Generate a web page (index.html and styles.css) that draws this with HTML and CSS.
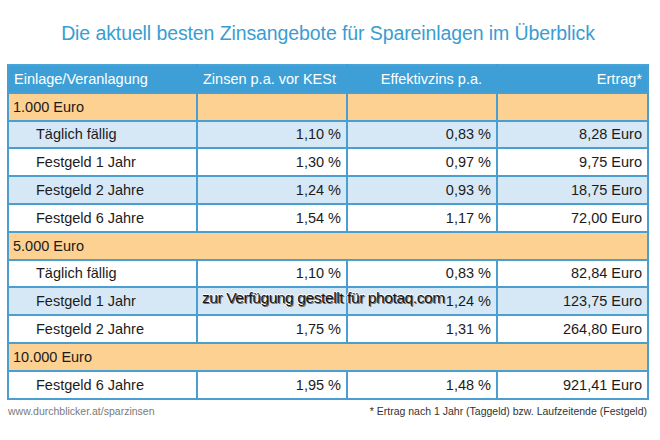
FILE: index.html
```html
<!DOCTYPE html>
<html lang="de">
<head>
<meta charset="utf-8">
<title>Zinsangebote</title>
<link rel="stylesheet" href="styles.css">
</head>
<body>
<div class="page">
  <h1 class="title">Die aktuell besten Zinsangebote für Spareinlagen im Überblick</h1>
  <div class="table-wrap">
    <table class="rates">
      <colgroup>
        <col class="c1"><col class="c2"><col class="c3"><col class="c4">
      </colgroup>
      <thead>
        <tr class="head">
          <th class="left">Einlage/Veranlagung</th>
          <th class="center">Zinsen p.a. vor KESt</th>
          <th class="center">Effektivzins p.a.</th>
          <th class="right">Ertrag*</th>
        </tr>
      </thead>
      <tbody>
        <tr class="group"><td>1.000 Euro</td><td></td><td></td><td></td></tr>
        <tr class="blue"><td class="sub">Täglich fällig</td><td class="num">1,10 %</td><td class="num">0,83 %</td><td class="num">8,28 Euro</td></tr>
        <tr class="white"><td class="sub">Festgeld 1 Jahr</td><td class="num">1,30 %</td><td class="num">0,97 %</td><td class="num">9,75 Euro</td></tr>
        <tr class="blue"><td class="sub">Festgeld 2 Jahre</td><td class="num">1,24 %</td><td class="num">0,93 %</td><td class="num">18,75 Euro</td></tr>
        <tr class="white"><td class="sub">Festgeld 6 Jahre</td><td class="num">1,54 %</td><td class="num">1,17 %</td><td class="num">72,00 Euro</td></tr>
        <tr class="group span"><td colspan="4">5.000 Euro</td></tr>
        <tr class="white"><td class="sub">Täglich fällig</td><td class="num">1,10 %</td><td class="num">0,83 %</td><td class="num">82,84 Euro</td></tr>
        <tr class="blue"><td class="sub">Festgeld 1 Jahr</td><td class="num"></td><td class="num">1,24 %</td><td class="num">123,75 Euro</td></tr>
        <tr class="white"><td class="sub">Festgeld 2 Jahre</td><td class="num">1,75 %</td><td class="num">1,31 %</td><td class="num">264,80 Euro</td></tr>
        <tr class="group span"><td colspan="4">10.000 Euro</td></tr>
        <tr class="white"><td class="sub">Festgeld 6 Jahre</td><td class="num">1,95 %</td><td class="num">1,48 %</td><td class="num">921,41 Euro</td></tr>
      </tbody>
    </table>
    <div class="watermark">zur Verfügung gestellt für photaq.com</div>
  </div>
  <div class="foot">
    <span class="url">www.durchblicker.at/sparzinsen</span>
    <span class="note">* Ertrag nach 1 Jahr (Taggeld) bzw. Laufzeitende (Festgeld)</span>
  </div>
</div>
</body>
</html>
```
FILE: styles.css
```css
html, body {
  margin: 0;
  padding: 0;
  background: #ffffff;
}
body {
  font-family: "Liberation Sans", Arial, Helvetica, sans-serif;
  color: #1b1b1b;
}
.page {
  width: 660px;
  height: 440px;
  padding: 0 13px 0 7px;
  box-sizing: border-box;
}
.title {
  margin: 0;
  padding-top: 21px;
  padding-left: 2px;
  height: 64px;
  box-sizing: border-box;
  font-size: 19.5px;
  font-weight: normal;
  color: #3a9dd2;
  text-align: center;
  line-height: 24px;
  letter-spacing: -0.1px;
}
.table-wrap {
  position: relative;
}
.rates {
  width: 640px;
  border-collapse: collapse;
  table-layout: fixed;
  font-size: 14.5px;
}
.c1 { width: 189px; }
.c2 { width: 150px; }
.c3 { width: 150px; }
.c4 { width: 151px; }
.rates td, .rates th {
  border: 2px solid #4b9fd0;
  height: 25.8px;
  padding: 0 5px;
  white-space: nowrap;
}
.head th {
  background: #3d9fd6;
  color: #ffffff;
  font-weight: normal;
  border-left-color: #3d9fd6;
  border-right-color: #3d9fd6;
  border-top-color: #48a3d6;
}
.head th:first-child { border-left-color: #4b9fd0; }
.head th:last-child { border-right-color: #4b9fd0; }
.head .left { text-align: left; }
.head .center { text-align: right; padding-right: 12px; }
.head .center + .center { padding-right: 14px; }
.head .right { text-align: right; }
.group td {
  background: #fcd192;
}
.group td:first-child { padding-left: 4px; }
.blue td { background: #d6e8f6; }
.white td { background: #ffffff; }
.sub { padding-left: 27px !important; }
.num { text-align: right; }
.watermark {
  position: absolute;
  left: 195px;
  top: 225px;
  font-size: 15.5px;
  letter-spacing: -0.4px;
  color: #161616;
  text-shadow: 1px 1px 0 #6f6f6f, -1px 0 0 #ffffff, 0 -1px 0 #ffffff;
  white-space: nowrap;
}
.foot {
  display: flex;
  justify-content: space-between;
  align-items: baseline;
  width: 640px;
  padding-top: 5px;
  font-size: 10.5px;
}
.url {
  color: #7a7a7a;
  padding-left: 1px;
}
.note {
  color: #333333;
}
```
